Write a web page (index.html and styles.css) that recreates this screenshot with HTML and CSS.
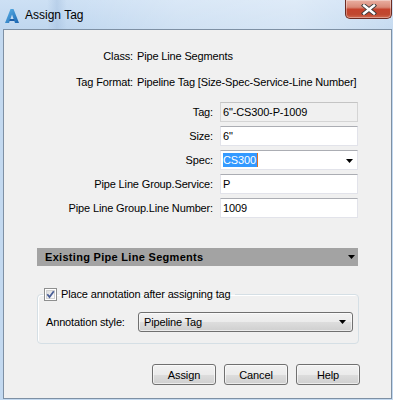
FILE: index.html
```html
<!DOCTYPE html>
<html lang="en">
<head>
  <meta charset="UTF-8" />
  <meta name="viewport" content="width=device-width, initial-scale=1.0"/>
  <title>Assign Tag</title>
  <link rel="stylesheet" href="styles.css">
</head>
<body>
  <div class="window">
    <div class="titlebar">
      <svg class="app-icon" viewBox="0 0 16 16" width="16" height="16">
        <defs>
          <linearGradient id="ag" x1="0" y1="0" x2="1" y2="1">
            <stop offset="0" stop-color="#5fb6ea"/>
            <stop offset="1" stop-color="#1a64b0"/>
          </linearGradient>
        </defs>
        <polygon points="6.5,1 9.5,1 15,15 11,15 8,6.5 5,15 1,15" fill="url(#ag)"/>
        <polygon points="6,11 10,11 10.8,13 5.2,13" fill="#1d5ea8"/>
      </svg>
      <span class="title">Assign Tag</span>
      <button class="close">
        <svg viewBox="0 0 16 11" width="16" height="11">
          <path d="M3 1.5 L13 9.5 M13 1.5 L3 9.5" stroke="#3a3a3a" stroke-width="4.2" stroke-linecap="square"/>
          <path d="M3 1.5 L13 9.5 M13 1.5 L3 9.5" stroke="#ffffff" stroke-width="2.4" stroke-linecap="square"/>
        </svg>
      </button>
    </div>

    <div class="client">
      <div class="info">
        <span class="lbl">Class:</span><span>Pipe Line Segments</span>
        <span class="lbl">Tag Format:</span><span>Pipeline Tag [Size-Spec-Service-Line Number]</span>
      </div>

      <div class="form">
        <label>Tag:</label>
        <div class="field readonly">6"-CS300-P-1009</div>
        <label>Size:</label>
        <div class="field">6"</div>
        <label>Spec:</label>
        <div class="field combo-edit"><span class="sel">CS300</span><span class="caret"></span>
          <svg class="arrow" viewBox="0 0 7 4" width="7" height="4"><polygon points="0,0 7,0 3.5,4" fill="#000"/></svg>
        </div>
        <label>Pipe Line Group.Service:</label>
        <div class="field">P</div>
        <label>Pipe Line Group.Line Number:</label>
        <div class="field">1009</div>
      </div>

      <div class="section-bar">
        <span>Existing Pipe Line Segments</span>
        <svg viewBox="0 0 7 4" width="7" height="4"><polygon points="0,0 7,0 3.5,4" fill="#000"/></svg>
      </div>

      <fieldset class="group">
        <legend>
          <svg class="check" viewBox="0 0 13 13" width="13" height="13">
            <defs>
              <linearGradient id="cb" x1="0" y1="0" x2="1" y2="1">
                <stop offset="0" stop-color="#dcdcdc"/>
                <stop offset="1" stop-color="#ffffff"/>
              </linearGradient>
            </defs>
            <rect x="0.5" y="0.5" width="12" height="12" fill="#fff" stroke="#8e8f8f"/>
            <rect x="2.5" y="2.5" width="8" height="8" fill="url(#cb)" stroke="#d2d2d2"/>
            <path d="M3.3 6.3 L5.5 9 L9.8 3.2" fill="none" stroke="#4a5f97" stroke-width="1.8"/>
          </svg>
          <span>Place annotation after assigning tag</span>
        </legend>
        <div class="anno-row">
          <span>Annotation style:</span>
          <div class="combo">
            <span>Pipeline Tag</span>
            <svg viewBox="0 0 7 4" width="7" height="4"><polygon points="0,0 7,0 3.5,4" fill="#000"/></svg>
          </div>
        </div>
      </fieldset>

      <div class="buttons">
        <button class="btn">Assign</button>
        <button class="btn">Cancel</button>
        <button class="btn">Help</button>
      </div>
    </div>
  </div>
</body>
</html>
```

FILE: styles.css
```css
:root {
  --frame: #c3d9f0;
  --face: #f0f0f0;
  --font: 'Liberation Sans', Arial, sans-serif;
}

body {
  margin: 0;
  font-family: var(--font);
  font-size: 11px;
  color: #000;
}

.window {
  width: 393px;
  height: 400px;
  overflow: hidden;
  background: var(--frame);
}

/* title bar */
.titlebar {
  height: 29px;
  display: flex;
  align-items: flex-start;
  background:
    linear-gradient(90deg, rgba(255,255,255,0) 0%, rgba(255,255,255,0) 12%, rgba(150,180,215,0.35) 14.5%, rgba(255,255,255,0) 17%, rgba(255,255,255,0.25) 45%, rgba(255,255,255,0.35) 75%, rgba(255,255,255,0.1) 100%),
    linear-gradient(180deg, #cde0f4 0%, #c0d7ef 100%);
}

.app-icon {
  margin: 8px 0 0 4px;
}

.title {
  margin: 8px 0 0 5px;
  font-size: 12px;
  line-height: 14px;
  color: #000;
}

.close {
  margin: 0 1px 0 auto;
  width: 47px;
  height: 19px;
  padding: 0;
  border: 1px solid #6b2b22;
  border-top: none;
  border-radius: 0 0 5px 5px;
  background: linear-gradient(180deg, #eab0a2 0%, #d98a78 40%, #c5432d 52%, #c0482f 80%, #d06a50 100%);
  box-shadow: inset 0 0 0 1px rgba(255,255,255,0.35);
  display: flex;
  align-items: center;
  justify-content: center;
}

/* client area */
.client {
  box-sizing: border-box;
  margin-left: 3px;
  width: 389px;
  height: 370px;
  border: 1px solid #7e90a4;
  background: var(--face);
  letter-spacing: -0.15px;
}

.info {
  display: grid;
  grid-template-columns: 129px 1fr;
  column-gap: 4px;
  row-gap: 12px;
  line-height: 14px;
  padding-top: 19px;
}

.lbl {
  text-align: right;
}

.form {
  margin-top: 13px;
  display: grid;
  grid-template-columns: 209px 138px;
  grid-auto-rows: 20px;
  column-gap: 7px;
  row-gap: 4px;
}

.form label {
  text-align: right;
  align-self: center;
  line-height: 14px;
}

.field {
  box-sizing: border-box;
  height: 20px;
  border: 1px solid #e2e3ea;
  border-top-color: #abadb3;
  background: #fff;
  padding-left: 2px;
  line-height: 18px;
  display: flex;
  align-items: center;
}

.field.readonly {
  background: var(--face);
  border-color: #d4d4d4;
  border-top-color: #c4c4c4;
}

.combo-edit .sel {
  background: #3399ff;
  color: #fff;
  line-height: 14px;
  padding-right: 1px;
}

.combo-edit .caret {
  width: 1px;
  height: 14px;
  background: #e07020;
}

.combo-edit .arrow {
  margin: 1px 4px 0 auto;
}

.section-bar {
  box-sizing: border-box;
  margin: 30px 0 0 33px;
  width: 321px;
  height: 18px;
  padding: 0 3px 0 8px;
  background: #a3a3a3;
  display: flex;
  align-items: center;
  justify-content: space-between;
  font-weight: bold;
  letter-spacing: 0.3px;
}

.group {
  box-sizing: border-box;
  margin: 21px 0 0 33px;
  width: 322px;
  padding: 0 4px 11px 5px;
  border: 1px solid #d5dfe5;
  border-radius: 4px;
  box-shadow: inset 1px 1px 0 #fff;
}

.group legend {
  padding: 0 4px 0 1px;
  display: flex;
  align-items: center;
  gap: 4px;
  line-height: 14px;
}

.anno-row {
  margin-top: 11px;
  display: flex;
  align-items: center;
  padding-left: 3px;
}

.anno-row > span {
  width: 92px;
}

.combo {
  box-sizing: border-box;
  width: 215px;
  height: 20px;
  border: 1px solid #707070;
  border-radius: 3px;
  background: linear-gradient(180deg, #f2f2f2 0%, #ebebeb 50%, #dddddd 51%, #cfcfcf 100%);
  box-shadow: inset 0 0 0 1px rgba(255,255,255,0.6);
  display: flex;
  align-items: center;
  justify-content: space-between;
  padding: 0 6px 0 5px;
}

.buttons {
  margin-top: 20px;
  padding-right: 31px;
  display: flex;
  justify-content: flex-end;
  gap: 8px;
}

.btn {
  width: 64px;
  height: 21px;
  padding: 0;
  font-family: var(--font);
  font-size: 11px;
  letter-spacing: -0.1px;
  color: #000;
  border: 1px solid #707070;
  border-radius: 3px;
  background: linear-gradient(180deg, #f2f2f2 0%, #ebebeb 50%, #dddddd 51%, #cfcfcf 100%);
  box-shadow: inset 0 0 0 1px rgba(255,255,255,0.6);
}
```
